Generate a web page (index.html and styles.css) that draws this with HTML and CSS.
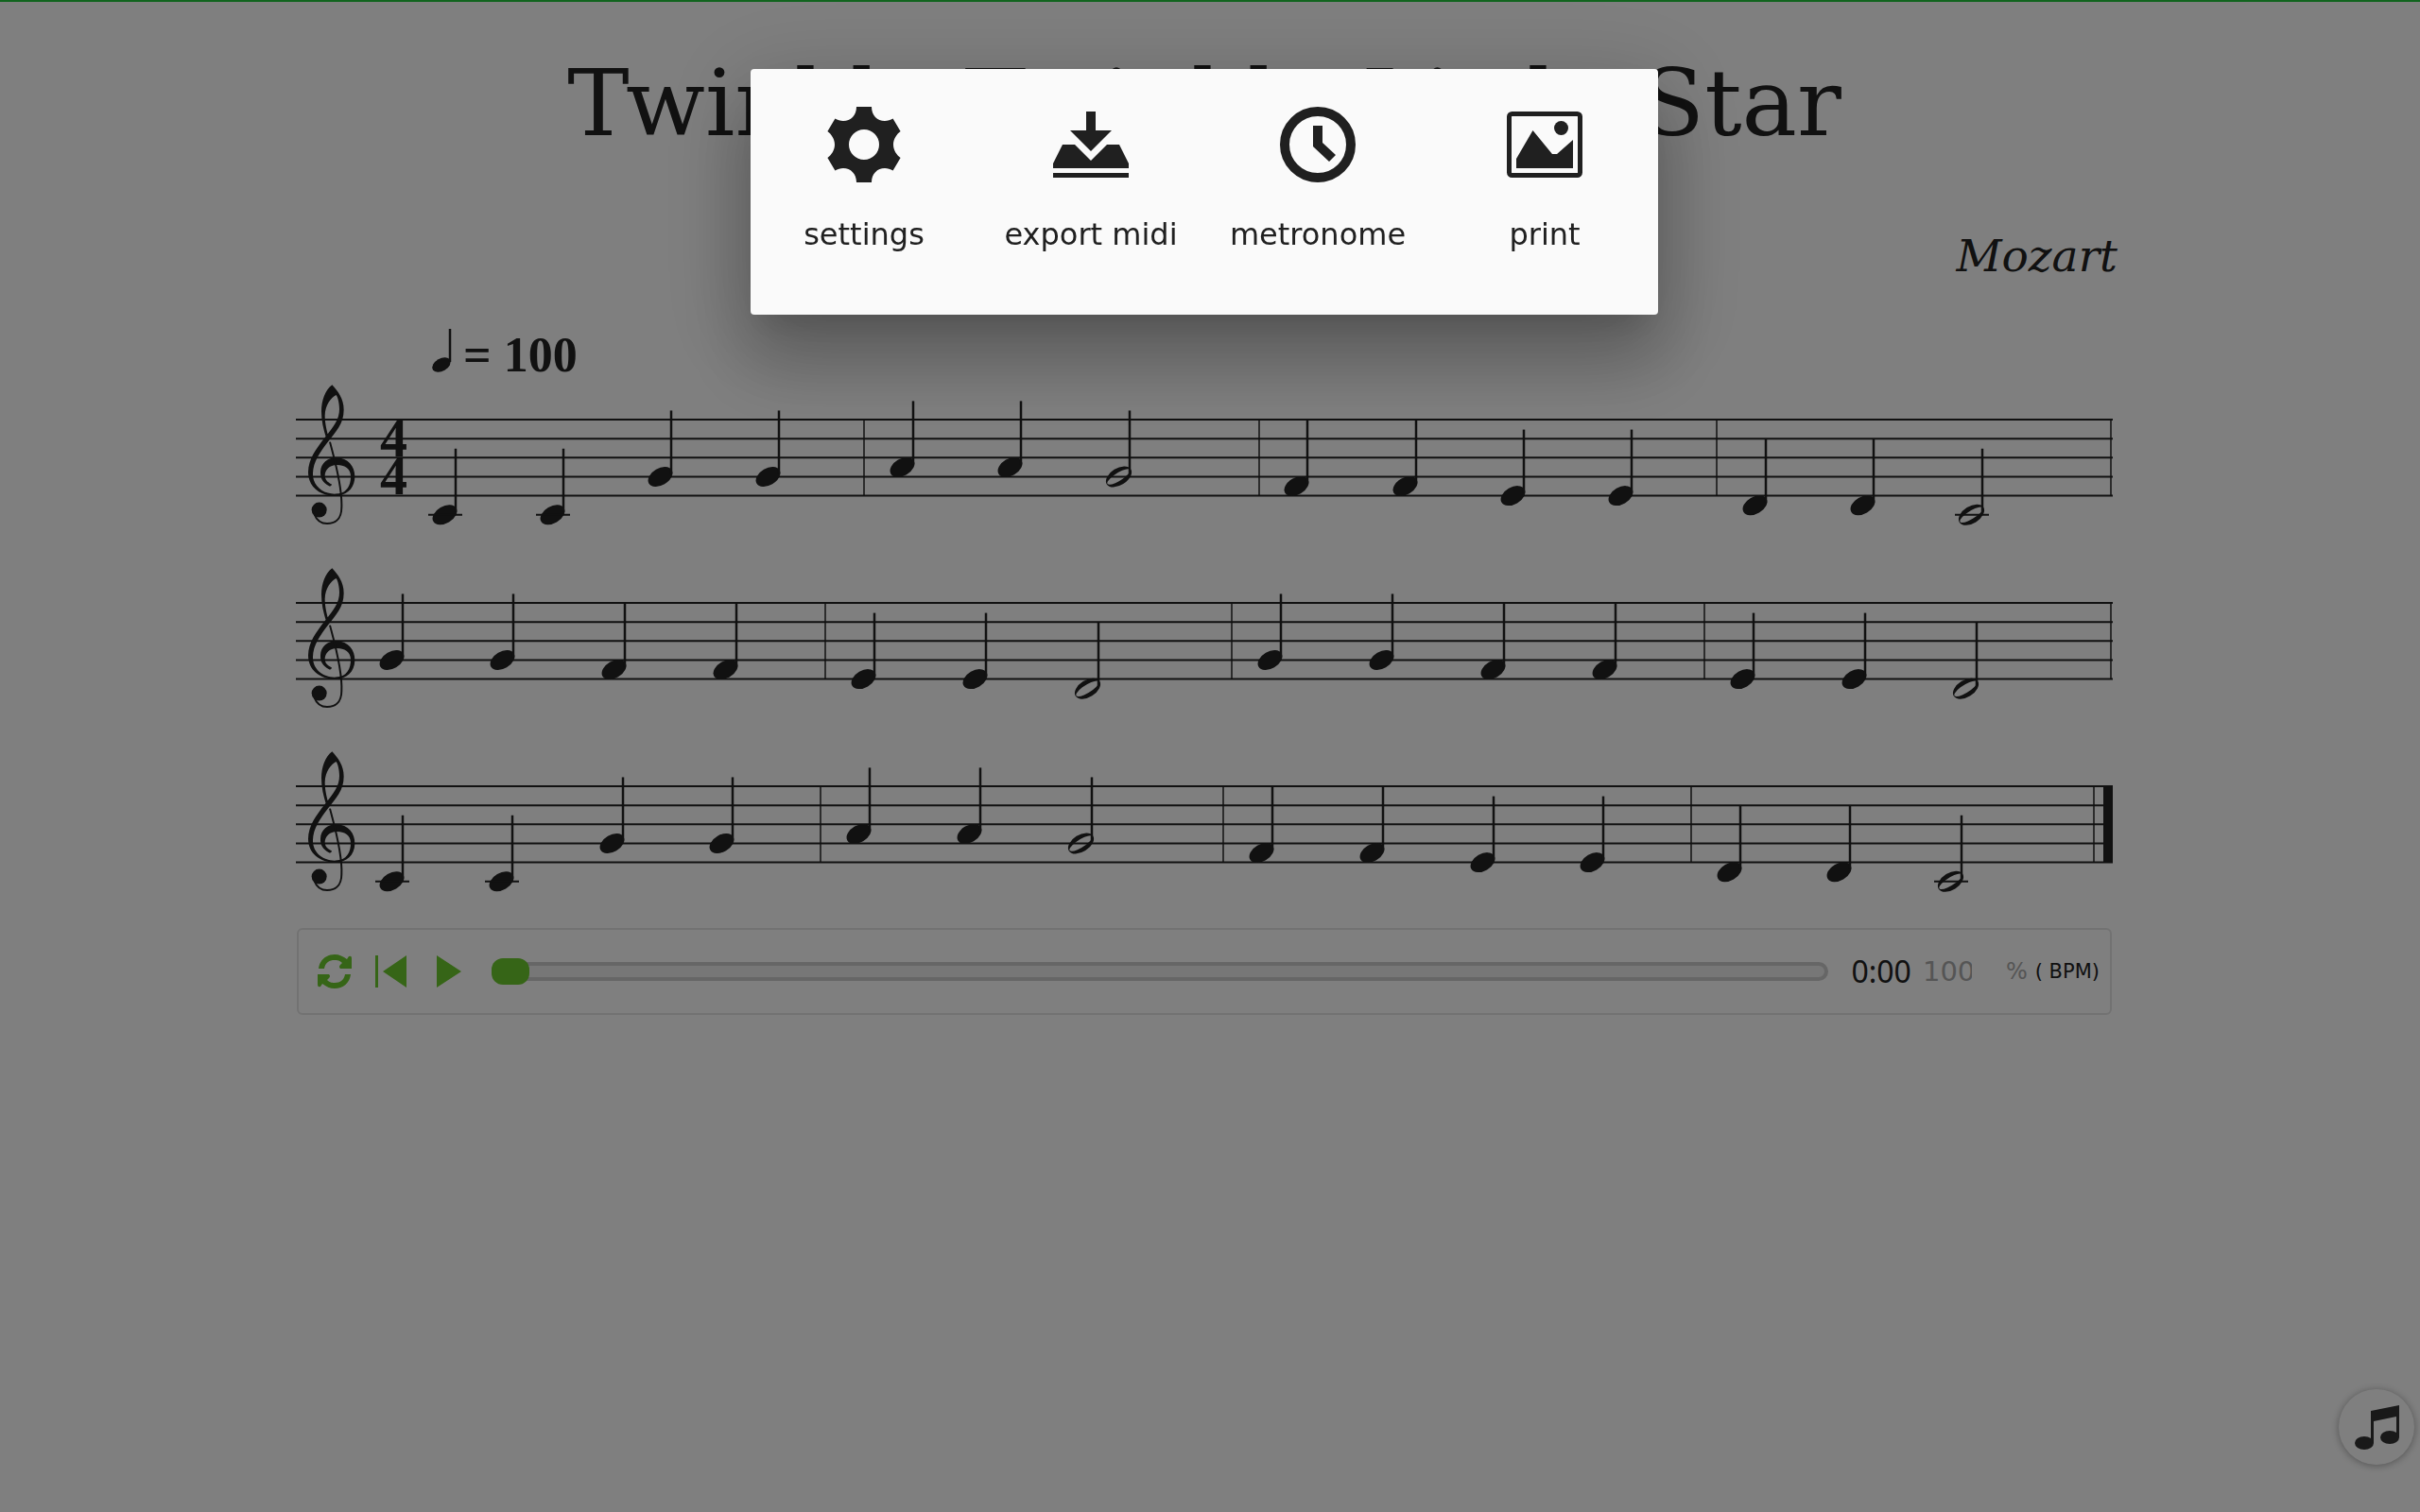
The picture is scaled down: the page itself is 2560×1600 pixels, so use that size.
FILE: index.html
```html
<!DOCTYPE html>
<html lang="en">
<head>
<meta charset="UTF-8">
<meta name="viewport" content="width=device-width, initial-scale=1.0">
<title>Twinkle Twinkle Little Star</title>
<link rel="stylesheet" href="styles.css">
</head>
<body>
<div class="page">
  <main class="sheet">
    <h1 class="title">Twinkle Twinkle Little Star</h1>
    <p class="composer">Mozart</p>
    <svg class="score" id="score" viewBox="0 0 1920 660" role="img" aria-label="Score">
      <defs>
        <ellipse id="quarter" rx="14" ry="9" transform="rotate(-30)"/>
        <path id="half" fill-rule="evenodd" transform="rotate(-32)" d="M-15 0A15 9 0 0 1 15 0A15 9 0 0 1 -15 0ZM-13.5 1.2A14 4.2 0 0 0 13.5 -1.2A14 4.2 0 0 0 -13.5 1.2Z"/>
        <g id="clef" transform="translate(-14 -63.7) scale(.3333)">
          <path d="M154 81C172 100 191 125 191 160C191 205 165 230 142 260C115 295 94 325 93 362C92 402 125 428 165 427C200 427 214 400 213 370C212 345 192 335 170 335C145 335 131 352 131 370C132 386 143 391 153 397C152 403 147 404 143 401C125 392 116 378 117 357C118 330 140 312 168 312C205 313 227 340 226 374C225 410 200 434 160 433C115 432 78 405 78 358C79 315 104 283 131 248C160 212 177 190 177 158C177 140 173 122 167 113C150 122 132 145 131 178C131 205 138 228 142 245L135 250C126 220 120 195 120 165C120 130 132 98 154 81Z"/>
          <path d="M147 262C158 305 187 400 184 470C184 510 160 521 138 521C118 521 104 508 98 492" fill="none" stroke="#222" stroke-width="6"/>
          <circle cx="113" cy="478" r="24"/>
        </g>
      </defs>
      <g transform="translate(153 78) scale(.75)"><use href="#quarter"/></g>
      <path class="stem" d="M162 40V75"/>
      <text class="tempo" x="176" y="85">= 100</text>
      <text class="meter"><tspan x="88" y="175">4</tspan><tspan x="88" y="215">4</tspan></text>
    </svg>
    <div class="player">
      <button class="control" aria-label="loop">
        <svg viewBox="0 0 36 36"><path d="M1 15C2 6 9 0 18 0C23 0 27 2 31 5L33 2Q36 1 36 4V15H24Q22 13 24 11L26 9C23 6 20 6 18 6C12 6 8 9 7 15ZM35 21C34 30 27 36 18 36C13 36 9 34 5 31L3 34Q0 35 0 32V21H12Q14 23 12 25L10 27C13 30 16 30 18 30C24 30 28 27 29 21Z"/></svg>
      </button>
      <button class="control" aria-label="back to start">
        <svg viewBox="0 0 36 36"><path d="M1 1h3v34H1zM34 1v34L9 18z"/></svg>
      </button>
      <button class="control" aria-label="play">
        <svg viewBox="0 0 36 36"><path d="M6 1v34L32 18z"/></svg>
      </button>
      <input class="progress" type="range" min="0" max="100" value="0" aria-label="position">
      <span class="clock">0:00</span>
      <input class="tempo-input" id="tempo" type="text" value="100">
      <label class="percent" for="tempo">%</label>
      <span class="bpm">( BPM)</span>
    </div>
  </main>
  <button class="fab" aria-label="menu">
    <svg viewBox="0 0 80 80"><path d="M34 23L64 17V51H61V29L37 34V57H34Z"/><ellipse cx="27" cy="57" rx="10" ry="7"/><ellipse cx="54" cy="51" rx="10" ry="7"/></svg>
  </button>
</div>

<div class="backdrop">
  <div class="dialog" role="dialog" aria-label="menu">
    <button class="action">
      <svg viewBox="0 0 80 80"><path fill-rule="evenodd" d="M32 0h16c0 9 6 15 14 15 3 0 6-1 8.600-2.400l8 13.400c-4 3-7.600 8-7.600 14s3.600 11 7.600 14l-8 13.400c-2.600-1.400-5.600-2.400-8.600-2.400-8 0-14 6-14 15H32c0-9-6-15-14-15-3 0-6 1-8.600 2.400l-8-13.400c4-3 7.600-8 7.600-14s-3.600-11-7.600-14l8-13.400c2.600 1.400 5.600 2.400 8.600 2.400 8 0 14-6 14-15zM40 24a16 16 0 1 0 0 32a16 16 0 1 0 0-32z"/></svg>
      <span>settings</span>
    </button>
    <button class="action">
      <svg viewBox="0 0 80 80"><path d="M35 5h10v20h17L40 47 18 25h17zM10 40h13l17 17 17-17h13l10 20v5H0v-5zM0 70h80v5H0z"/></svg>
      <span>export midi</span>
    </button>
    <button class="action">
      <svg viewBox="0 0 80 80"><circle cx="40" cy="40" r="35" fill="none" stroke="#202020" stroke-width="10"/><path d="M35 20h10v18l14 13-7 7-17-16z"/></svg>
      <span>metronome</span>
    </button>
    <button class="action">
      <svg viewBox="0 0 80 80"><rect x="2.500" y="7.500" width="75" height="65" rx="3" fill="none" stroke="#202020" stroke-width="5"/><circle cx="57.500" cy="22.500" r="7.500"/><path d="M10 55l17.500-30L48 50h5l17-15v30H10z"/></svg>
      <span>print</span>
    </button>
  </div>
</div>

<script>
const svg = document.getElementById('score');
const gap = 20.15;
const pitches = ['F', 'E', 'D', 'C', 'B', 'A', 'G', 'f', 'e', 'd', 'c'];

// pitch + stem position, "/" is a half note
const rows = [
  { top: 136, bars: [600, 1018, 1502, 1919],
    notes: 'c168 c282 G396 G510 A652 A766 G881/ f1069 f1184 e1298 e1412 d1554 d1668 c1783/' },
  { top: 330, bars: [559, 989, 1489, 1919],
    notes: 'G112 G229 f347 f465 e611 e729 d848/ G1041 G1159 f1277 f1395 e1541 e1659 d1777/' },
  { top: 524, bars: [554, 980, 1475, 1901],
    notes: 'c112 c228 G345 G461 A606 A723 G841/ f1032 f1149 e1266 e1382 d1527 d1643 c1761/' }
];

function draw(tag, attrs) {
  const el = document.createElementNS('http://www.w3.org/2000/svg', tag);
  for (let key in attrs) {
    el.setAttribute(key, attrs[key]);
  }
  svg.appendChild(el);
}

rows.forEach(row => {
  for (let i = 0; i < 5; i++) {
    const y = row.top + i * gap;
    draw('path', { class: 'line', d: `M-1 ${y}H1921` });
  }
  row.bars.forEach(x => {
    draw('path', { class: 'bar', d: `M${x} ${row.top}v${gap * 4}` });
  });
  draw('use', { href: '#clef', x: 0, y: row.top });

  row.notes.split(' ').forEach(note => {
    const x = parseInt(note.slice(1));
    const half = note.endsWith('/');
    const y = row.top + pitches.indexOf(note[0]) * gap / 2;
    draw('use', { href: half ? '#half' : '#quarter', x: x - 11.5, y: y });
    draw('path', { class: 'stem', d: `M${x} ${y - 70}V${y - 3}` });
    if (note[0] === 'c') {
      draw('path', { class: 'line', d: `M${x - 29} ${y}h36` });
    }
  });
});

// closing bar
draw('rect', { x: 1911, y: 523, width: 10, height: 82 });
</script>
</body>
</html>
```
FILE: styles.css
```css
* {
  box-sizing: border-box;
}

body {
  margin: 0;
  background-color: #fff;
  color: #222;
  font-family: "DejaVu Sans", Verdana, sans-serif;
}

button {
  padding: 0;
  border: 0;
  background: none;
  color: inherit;
  font: inherit;
  cursor: pointer;
}

.page {
  min-height: 100vh;
  padding-right: 12px;
  border-top: 2px solid #22c83c;
}

.sheet {
  width: 75vw;
  margin: 0 auto;
  padding-top: 47px;
}

.title {
  margin: 0;
  font-family: "DejaVu Serif", serif;
  font-size: 98px;
  font-weight: normal;
  line-height: 120px;
  text-align: center;
  white-space: nowrap;
}

.composer {
  margin: 64px -6px 0 0;
  font-family: "DejaVu Serif", serif;
  font-size: 47px;
  font-style: italic;
  line-height: 75px;
  text-align: right;
}

.score {
  display: block;
  width: 100%;
  overflow: visible;
  fill: #222;
}

.line {
  stroke: #222;
  stroke-width: 2;
}

.bar {
  stroke: #222;
  stroke-width: 1.5;
}

.stem {
  stroke: #222;
  stroke-width: 2.5;
}

.tempo,
.meter {
  font-family: "Liberation Serif", serif;
  font-size: 52px;
  font-weight: bold;
}

.meter {
  font-size: 58px;
}

.player {
  display: flex;
  align-items: center;
  gap: 24px;
  height: 92px;
  margin-top: 14px;
  padding: 0 11px 0 20px;
  border: 2px solid #e4e4e4;
  border-radius: 6px;
}

.control {
  width: 36px;
  height: 36px;
  fill: #6cca2e;
}

.control svg,
.action svg,
.fab svg {
  display: block;
}

.progress {
  flex: 1;
  min-width: 0;
  height: 20px;
  margin: 0 0 0 4px;
  appearance: none;
  background-color: #eee;
  border: 4px solid #ccc;
  border-radius: 10px;
}

.progress::-webkit-slider-thumb {
  appearance: none;
  width: 40px;
  height: 28px;
  margin-left: -4px;
  border-radius: 12px;
  background-color: #6cca2e;
}

.clock {
  font-family: "Noto Sans", sans-serif;
  font-size: 32px;
  line-height: 36px;
}

.tempo-input {
  width: 52px;
  margin-left: -12px;
  padding: 0;
  border: 0;
  background: none;
  color: #aaa;
  font: 29px "DejaVu Sans", Verdana, sans-serif;
}

.percent {
  margin-left: 12px;
  color: #aaa;
  font-size: 24px;
}

.bpm {
  margin-left: -16px;
  font-size: 21px;
}

.fab {
  position: fixed;
  right: 6px;
  bottom: 50px;
  width: 80px;
  height: 80px;
  border-radius: 50%;
  background-color: #fff;
  box-shadow: 0 1px 8px rgba(0, 0, 0, 0.35);
  fill: #333;
}

.backdrop {
  position: fixed;
  inset: 0;
  padding: 73px 12px 0 0;
  background-color: rgba(0, 0, 0, 0.5);
}

.dialog {
  display: grid;
  grid-template-columns: repeat(4, 1fr);
  width: 960px;
  max-width: 100%;
  margin: 0 auto;
  padding: 40px 0 60px;
  border-radius: 4px;
  background-color: #fafafa;
  box-shadow: 0 18px 92px 16px rgba(0, 0, 0, 0.14),
    0 22px 30px -14px rgba(0, 0, 0, 0.12),
    0 48px 76px 6px rgba(0, 0, 0, 0.2);
}

.action {
  display: flex;
  flex-direction: column;
  align-items: center;
  gap: 31px;
  height: 160px;
  color: #202020;
  fill: #202020;
  font-size: 32px;
  line-height: 48px;
}

.action svg {
  width: 80px;
  height: 80px;
}
```
